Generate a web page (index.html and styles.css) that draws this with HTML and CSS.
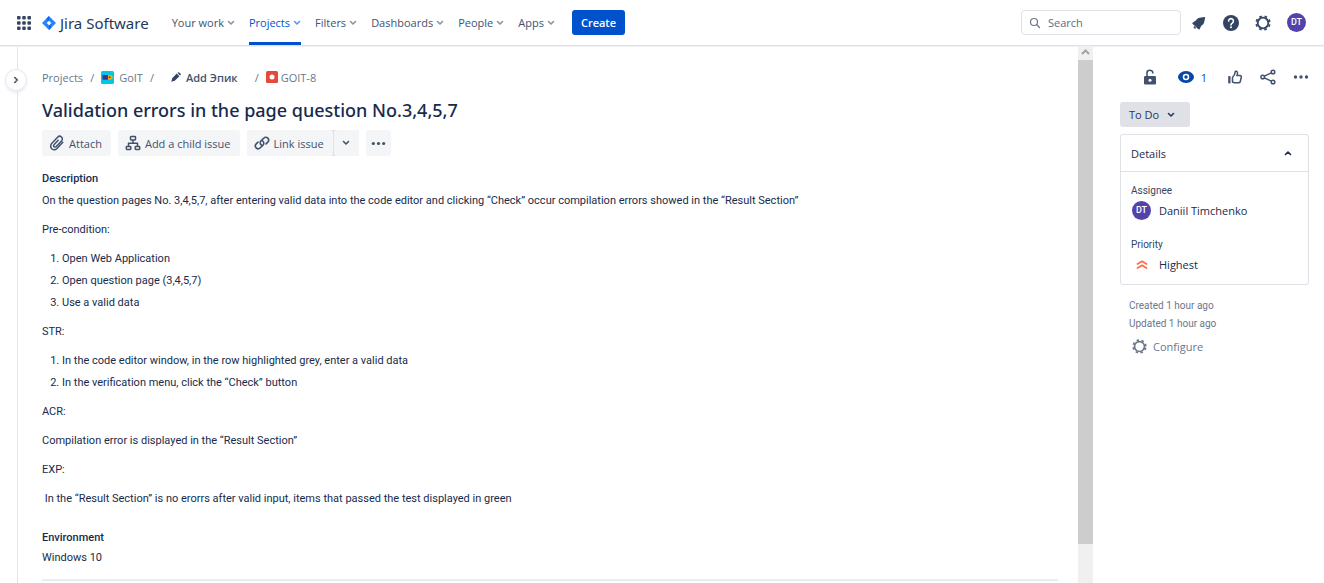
FILE: index.html
```html
<!DOCTYPE html>
<html lang="en">
<head>
<meta charset="utf-8">
<title>GOIT-8 Validation errors in the page question No.3,4,5,7</title>
<link rel="stylesheet" href="styles.css">
</head>
<body>
<svg class="defs" aria-hidden="true">
  <symbol id="down" viewBox="0 0 8 8"><path d="M1.500 2.500 4 5l2.500-2.500" fill="none" stroke="currentColor" stroke-width="1.600" stroke-linecap="round" stroke-linejoin="round"/></symbol>
  <symbol id="dots" viewBox="0 0 16 16"><g fill="currentColor"><circle cx="2.500" cy="8" r="1.700"/><circle cx="8" cy="8" r="1.700"/><circle cx="13.500" cy="8" r="1.700"/></g></symbol>
  <symbol id="gear" viewBox="0 0 16 16"><g fill="none" stroke="currentColor"><circle cx="8" cy="8" r="5.300" stroke-width="1.800"/><circle cx="8" cy="8" r="6.800" stroke-width="1.700" stroke-dasharray="2.600 2.740" stroke-dashoffset="-1.370"/></g></symbol>
</svg>

<header class="topbar">
  <button class="icon-btn apps" aria-label="Switch apps"><svg viewBox="0 0 14 14" width="14" height="14" fill="#344563"><rect width="3.600" height="3.600" rx="1"/><rect x="5.200" width="3.600" height="3.600" rx="1"/><rect x="10.400" width="3.600" height="3.600" rx="1"/><rect y="5.200" width="3.600" height="3.600" rx="1"/><rect x="5.200" y="5.200" width="3.600" height="3.600" rx="1"/><rect x="10.400" y="5.200" width="3.600" height="3.600" rx="1"/><rect y="10.400" width="3.600" height="3.600" rx="1"/><rect x="5.200" y="10.400" width="3.600" height="3.600" rx="1"/><rect x="10.400" y="10.400" width="3.600" height="3.600" rx="1"/></svg></button>
  <a class="brand" href="#">
    <svg viewBox="0 0 14 14" width="14" height="14"><path d="M7 0l7 7-7 7-7-7z" fill="#2684ff"/><path d="M7 0 4.500 2.500Q4.600 4.400 7 5zM7 14l2.500-2.500Q9.400 9.600 7 9z" fill="#0c66e4"/><path d="M7 4.700 9.300 7 7 9.300 4.700 7z" fill="#fff"/></svg>
    <span>Jira Software</span>
  </a>
  <nav class="menu">
    <button>Your work <svg class="chev"><use href="#down"/></svg></button>
    <button class="active">Projects <svg class="chev"><use href="#down"/></svg></button>
    <button>Filters <svg class="chev"><use href="#down"/></svg></button>
    <button>Dashboards <svg class="chev"><use href="#down"/></svg></button>
    <button>People <svg class="chev"><use href="#down"/></svg></button>
    <button>Apps <svg class="chev"><use href="#down"/></svg></button>
  </nav>
  <button class="create">Create</button>
  <div class="tools">
    <label class="search"><svg viewBox="0 0 12 12" width="12" height="12"><circle cx="5" cy="5" r="3.500" fill="none" stroke="#6b778c" stroke-width="1.200"/><path d="m7.800 7.800 2.700 2.700" stroke="#6b778c" stroke-width="1.300" stroke-linecap="round"/></svg><input type="text" placeholder="Search" aria-label="Search"></label>
    <button class="icon-btn" aria-label="Notifications"><svg viewBox="0 0 16 16" width="16" height="16" fill="#344563"><path d="M13.800 1.900 8.600 2.700C6.800 3 5.900 4.100 4.900 5.600L1.800 7.500c-.7.500-.6 1 0 1.500l5.300 5.100c.6.500 1.200.5 1.600-.2l1.600-3.100c1.500-1 2.600-2 2.900-3.800l1-4.500c.1-.4-.1-.6-.4-.6z"/><path d="M3.100 11 5.300 13.100c-.7.800-1.600.9-2.200.2-.6-.6-.6-1.500 0-2.300z"/></svg></button>
    <button class="icon-btn" aria-label="Help"><svg viewBox="0 0 16 16" width="16" height="16"><circle cx="8" cy="8" r="8" fill="#344563"/><path d="M5.600 6.100a2.400 2.400 0 1 1 3.700 2C8.400 8.600 8 8.900 8 9.900" fill="none" stroke="#fff" stroke-width="1.600" stroke-linecap="round"/><circle cx="8" cy="12.300" r="1" fill="#fff"/></svg></button>
    <button class="icon-btn" aria-label="Settings"><svg width="16" height="16" color="#344563"><use href="#gear"/></svg></button>
    <button class="avatar" aria-label="Your profile">DT</button>
  </div>
</header>

<div class="page">
  <aside class="rail"><button class="expand" aria-label="Expand sidebar"><svg viewBox="0 0 8 8" width="8" height="8"><path d="M2.800 1.500 5.300 4 2.800 6.500" fill="none" stroke="#42526e" stroke-width="1.600" stroke-linecap="round" stroke-linejoin="round"/></svg></button></aside>

  <main class="issue">
    <nav class="crumbs" aria-label="Breadcrumbs">
      <a href="#">Projects</a><span class="slash">/</span>
      <a href="#"><svg viewBox="0 0 13 13" width="13" height="13"><rect width="13" height="13" rx="1.500" fill="#00c7e6"/><path d="M1.500 4h5.500v4.700H1.500z" fill="#403294"/><path d="M7 4h2.700q2 .3 2 2.300T9.700 8.700H7z" fill="#ffab00"/><circle cx="8.700" cy="6.300" r="1" fill="#6b4b16"/></svg>GoIT</a><span class="slash">/</span>
      <button class="epic"><svg viewBox="0 0 10 10" width="10" height="10" fill="#344563"><path d="m1.200 6.200 4.600-4.600 2.600 2.600-4.600 4.600L.3 9.700zM6.500.9 7 .4q.6-.5 1.200 0l1.400 1.400q.5.600 0 1.200l-.5.500z"/></svg>Add Эпик</button><span class="slash">/</span>
      <a href="#" class="key"><svg viewBox="0 0 12 12" width="12" height="12"><rect width="12" height="12" rx="1.500" fill="#e5493a"/><circle cx="6" cy="6" r="2.500" fill="#fff"/></svg>GOIT-8</a>
    </nav>
    <h1>Validation errors in the page question No.3,4,5,7</h1>
    <div class="actions">
      <button><svg viewBox="0 0 16 16" width="16" height="16" fill="none" stroke="#42526e" stroke-width="1.500" stroke-linecap="round"><path d="m13.800 7.200-5.600 6c-1.600 1.700-3.900 1.900-5.400.5s-1.500-3.700.1-5.400l5.700-6c1.100-1.200 2.800-1.300 3.900-.3s1.100 2.700 0 3.900L7.300 11.500c-.7.700-1.600.8-2.200.2s-.6-1.500.1-2.200l4-4.300"/></svg>Attach</button>
      <button><svg viewBox="0 0 16 16" width="16" height="16" fill="none" stroke="#42526e" stroke-width="1.500" stroke-linejoin="round"><rect x="5.500" y="1.500" width="5" height="3.500" rx=".7"/><rect x="1.300" y="11.500" width="4.500" height="3" rx=".7"/><rect x="10.200" y="11.500" width="4.500" height="3" rx=".7"/><path d="M8 5v3.300M3.500 11.500V8.300h9v3.200"/></svg>Add a child issue</button>
      <div class="split">
        <button><svg viewBox="0 0 16 16" width="16" height="16" fill="none" stroke="#42526e" stroke-width="1.600" stroke-linecap="round"><path d="M7.200 9.900c-1.300-1.200-1.300-2.900-.2-4l2.700-2.700c1.200-1.200 3-1.200 4.100-.1s1.100 2.800 0 4L12 8.900M8.800 6.100c1.300 1.200 1.300 2.900.2 4l-2.700 2.700c-1.200 1.200-3 1.200-4.100.1s-1.100-2.800 0-4L4 7.100"/></svg>Link issue</button>
        <button class="more" aria-label="More link options"><svg class="chev"><use href="#down"/></svg></button>
      </div>
      <button class="more" aria-label="More actions"><svg width="15" height="15"><use href="#dots"/></svg></button>
    </div>

    <h2>Description</h2>
    <div class="text">
      <p>On the question pages No. 3,4,5,7, after entering valid data into the code editor and clicking “Check” occur compilation errors showed in the “Result Section”</p>
      <p>Pre-condition:</p>
      <ol><li>Open Web Application</li><li>Open question page (3,4,5,7)</li><li>Use a valid data</li></ol>
      <p>STR:</p>
      <ol><li>In the code editor window, in the row highlighted grey, enter a valid data</li><li>In the verification menu, click the “Check” button</li></ol>
      <p>ACR:</p>
      <p>Compilation error is displayed in the “Result Section”</p>
      <p>EXP:</p>
      <p>&nbsp;In the “Result Section” is no erorrs after valid input, items that passed the test displayed in green</p>
    </div>
    <h2 class="env">Environment</h2>
    <div class="text"><p>Windows 10</p></div>
    <hr>
  </main>

  <div class="scroll" aria-hidden="true"><svg viewBox="0 0 15 15" width="15" height="15"><path d="m4 9 3.500-3.500L11 9" fill="none" stroke="#a3a3a3" stroke-width="2"/></svg><div class="thumb"></div></div>

  <aside class="side">
    <div class="side-tools">
      <button class="icon-btn" aria-label="Restrictions"><svg viewBox="0 0 16 16" width="16" height="16"><rect x="2" y="7" width="12" height="8.500" rx="1.300" fill="#42526e"/><path d="M5 7V3.700C5 .5 10.800.5 10.800 3.700v.8" fill="none" stroke="#42526e" stroke-width="1.600"/><circle cx="8" cy="11.300" r="1.500" fill="#fff"/></svg></button>
      <button class="icon-btn watch" aria-label="Watchers"><svg viewBox="0 0 16 16" width="16" height="16"><path d="M8 2C3.500 2 0 5.600 0 8s3.500 6 8 6 8-3.600 8-6-3.500-6-8-6z" fill="#0747a6"/><circle cx="8" cy="8" r="2.500" fill="none" stroke="#fff" stroke-width="1.500"/></svg>1</button>
      <button class="icon-btn" aria-label="Vote"><svg viewBox="0 0 16 16" width="16" height="16"><rect x="1.200" y="7" width="2.300" height="7.500" rx=".7" fill="#42526e"/><path d="M5.500 13V8.300C7.200 7 8 4.800 8.200 2.900c.1-1.200 2.200-1 2.300.7.100 1.100-.3 2.100-.6 2.900h3c1.300 0 1.600.9 1.400 1.700l-1 4.300c-.2.800-.8 1.300-1.700 1.300H7.300z" fill="none" stroke="#42526e" stroke-width="1.500" stroke-linejoin="round"/></svg></button>
      <button class="icon-btn" aria-label="Share"><svg viewBox="0 0 16 16" width="16" height="16" fill="none" stroke="#42526e" stroke-width="1.500"><circle cx="2.700" cy="8" r="1.800"/><circle cx="13" cy="3" r="1.800"/><circle cx="13" cy="13" r="1.800"/><path d="m4.300 7.200 7-3.400M4.300 8.800l7 3.400"/></svg></button>
      <button class="icon-btn" aria-label="Actions"><svg width="16" height="16"><use href="#dots"/></svg></button>
    </div>
    <button class="status">To Do <svg class="chev"><use href="#down"/></svg></button>
    <section class="card">
      <button class="card-head" aria-expanded="true">Details <svg class="chev up"><use href="#down"/></svg></button>
      <dl>
        <dt>Assignee</dt>
        <dd><span class="avatar">DT</span>Daniil Timchenko</dd>
        <dt>Priority</dt>
        <dd><svg class="prio" viewBox="0 0 20 20" width="20" height="20" fill="none" stroke="#ff6b4a" stroke-width="1.700" stroke-linecap="round" stroke-linejoin="round"><path d="M5.500 9 10 6.300 14.500 9M5.500 13 10 10.300l4.500 2.700"/></svg>Highest</dd>
      </dl>
    </section>
    <p class="stamp">Created 1 hour ago</p>
    <p class="stamp">Updated 1 hour ago</p>
    <button class="configure"><svg width="15" height="15"><use href="#gear"/></svg>Configure</button>
  </aside>
</div>
</body>
</html>
```
FILE: styles.css
```css
* { box-sizing: border-box; }
body {
  margin: 0;
  height: 100vh;
  display: flex;
  flex-direction: column;
  overflow: hidden;
  background: #fff;
  color: #172b4d;
  font: 11px/19px "Open Sans", "Noto Sans", sans-serif;
}
button {
  display: flex;
  align-items: center;
  margin: 0;
  padding: 0;
  border: 0;
  background: none;
  color: #42526e;
  font: inherit;
  white-space: nowrap;
}
svg { display: block; flex: none; }
a { color: inherit; text-decoration: none; }
p, h1, h2, dl, dd, ol { margin: 0; padding: 0; }
.defs { position: absolute; width: 0; height: 0; }
.chev { width: 8px; height: 8px; }

.topbar {
  position: relative;
  z-index: 1;
  flex: none;
  display: flex;
  align-items: center;
  height: 45px;
  padding: 0 18px 0 17px;
  box-shadow: 0 1px #dfe1e6, 0 2px #f0f1f4;
}
.brand {
  display: flex;
  align-items: center;
  gap: 4px;
  margin: 0 23px 0 11px;
  font: 15px/20px "Noto Sans", sans-serif;
  color: #253858;
  white-space: nowrap;
}
.menu { display: flex; align-self: stretch; gap: 14px; }
.menu button { gap: 3px; }
.menu .chev { color: #8993a4; }
.menu .active { color: #0052cc; box-shadow: inset 0 -3px #0052cc; }
.menu .active .chev { color: #4c9aff; }
.create {
  height: 25px;
  margin-left: 17px;
  padding: 0 9px;
  border-radius: 3px;
  background: #0052cc;
  color: #fff;
  font-weight: 600;
}
.tools { display: flex; align-items: center; gap: 16px; margin-left: auto; }
.search {
  display: flex;
  align-items: center;
  gap: 7px;
  width: 160px;
  height: 25px;
  margin-right: -6px;
  padding: 0 7px;
  border: 1px solid #dfe1e6;
  border-radius: 4px;
}
.search input {
  flex: 1;
  min-width: 0;
  padding: 0;
  border: 0;
  outline: 0;
  background: none;
  font: inherit;
}
.search input::placeholder { color: #5e6c84; opacity: 1; }
.avatar {
  display: flex;
  align-items: center;
  justify-content: center;
  width: 19px;
  height: 19px;
  border-radius: 50%;
  background: #5243aa;
  color: #fff;
  font: 500 9px/19px Roboto, sans-serif;
}

.page { flex: 1; min-height: 0; display: flex; }
.rail {
  flex: none;
  width: 18px;
  border-right: 1px solid #e2e4e9;
  padding: 25px 0 0 6px;
}
.expand {
  position: relative;
  justify-content: center;
  width: 20px;
  height: 20px;
  border-radius: 50%;
  background: #fff;
  box-shadow: 0 0 0 1px #ebecf0, 0 2px 4px #dfe1e6;
}

.issue { flex: 1; min-width: 0; padding: 22px 20px 0 24px; }
.crumbs { display: flex; align-items: center; height: 20px; color: #6b778c; white-space: nowrap; }
.crumbs a, .epic { display: flex; align-items: center; gap: 5px; }
.crumbs .key { gap: 3px; }
.slash { margin: 0 7px; }
.epic { padding: 0 10px; font-weight: 600; }
h1 { margin-top: 12px; font: 500 18px/22px "Noto Sans", sans-serif; }
.actions { display: flex; gap: 7px; margin: 9px 0 13px; }
.actions button {
  gap: 4px;
  height: 26px;
  padding: 0 9px 0 7px;
  border-radius: 3px;
  background: #f4f5f7;
}
.split { display: flex; gap: 1px; background: #dfe1e6; border-radius: 3px; }
.actions .more { justify-content: center; width: 25px; padding: 0; }
h2 { font: 500 11px/20px Roboto, sans-serif; }
.text {
  display: flex;
  flex-direction: column;
  gap: 10px;
  margin-top: 2px;
  font-family: Roboto, sans-serif;
}
ol { display: flex; flex-direction: column; gap: 3px; padding-left: 20px; }
.env { margin-top: 20px; }
.env + .text { margin-top: 0; }
hr { margin: 12px 0 0; border: 0; border-top: 2px solid #ebecf0; }

.scroll { flex: none; width: 15px; background: #f0f0f0; }
.thumb { height: 90%; background: #cdcdcd; }

.side { flex: none; width: 231px; padding: 23px 15px 0 27px; }
.side-tools { display: flex; justify-content: flex-end; align-items: center; height: 18px; gap: 17px; }
.side-tools button { color: #42526e; }
.side-tools .watch { gap: 7px; margin: 0 3px; color: #0052cc; }
.status {
  gap: 8px;
  height: 25px;
  margin: 16px 0 7px;
  padding: 0 15px 0 9px;
  border-radius: 3px;
  background: #dfe1e6;
  color: #253858;
}
.card { border: 1px solid #dfe1e6; border-radius: 3px; }
.card-head {
  justify-content: space-between;
  width: 100%;
  height: 37px;
  padding: 0 16px 0 10px;
  border-bottom: 1px solid #dfe1e6;
  color: #172b4d;
}
.up { transform: rotate(180deg); }
dl { padding: 10px 10px 9px; }
dt { font: 10px/18px Roboto, sans-serif; color: #344563; }
dd { display: flex; align-items: center; gap: 8px; height: 21px; padding-left: 1px; }
dd + dt { margin-top: 15px; }
dd .prio { margin-right: -1px; }
.stamp { padding-left: 9px; font: 10px/18px Roboto, sans-serif; color: #6b778c; }
.card + .stamp { margin-top: 12px; }
.configure { gap: 6px; margin: 4px 0 0 12px; color: #6b778c; }
```
